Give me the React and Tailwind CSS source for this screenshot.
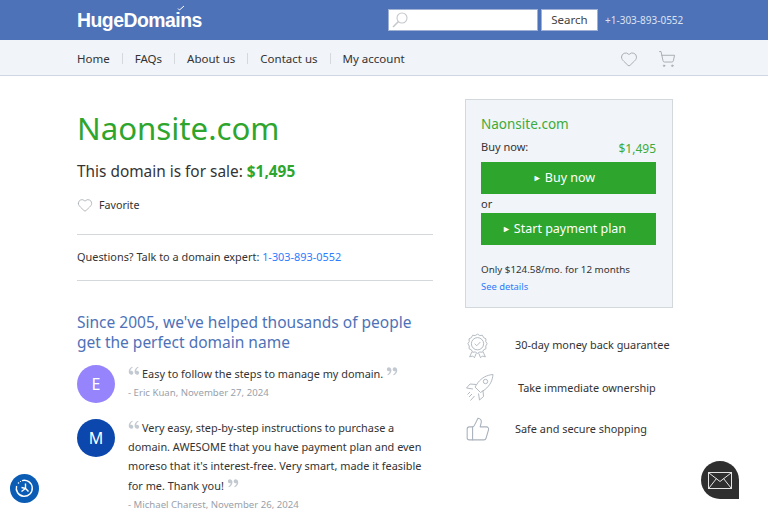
import { Heart, ShoppingCart, ThumbsUp } from 'lucide-react';
import { RiDoubleQuotesL, RiDoubleQuotesR } from 'react-icons/ri';

const navItems = ['Home', 'FAQs', 'About us', 'Contact us', 'My account'];

function Quote({ close }) {
  const Icon = close ? RiDoubleQuotesR : RiDoubleQuotesL;
  return <Icon className={`inline-block relative -top-[4px] w-[14px] h-[14px] -my-[5px] align-[1px] text-[#c3c9d0] ${close ? 'ml-[2px]' : '-ml-[1px] mr-[1px]'}`} />;
}

function Review({ letter, color, by, children }) {
  return (
    <div className="flex gap-[13px]">
      <div className={`w-[38px] h-[38px] rounded-full flex items-center justify-center text-white text-[16px] shrink-0 mt-[1px] ${color}`}>
        {letter}
      </div>
      <div className="flex-1">
        <p className="text-[10.9px] leading-[19.2px] text-[#333]">
          <Quote />{children}<Quote close />
        </p>
        <p className="text-[9.6px] leading-[19px] text-[#9aa1aa]">{by}</p>
      </div>
    </div>
  );
}

function Perk({ icon, className, children }) {
  return (
    <div className="flex items-center h-[30px]">
      <div className="w-[50px] shrink-0 text-[#a9b2bc]">{icon}</div>
      <span className={`text-[10.9px] whitespace-nowrap text-[#333] ${className}`}>{children}</span>
    </div>
  );
}

function MedalIcon() {
  return (
    <svg className="ml-[2px]" width="21" height="27" viewBox="0 0 24 28" fill="none" stroke="currentColor" strokeWidth="1">
      <path d="M12 1l2.600 1.600 3-.3 1.400 2.700 2.700 1.400-.3 3L23 12l-1.600 2.600.3 3-2.700 1.400-1.400 2.700-3-.3L12 23l-2.600-1.600-3 .3L5 19l-2.700-1.400.3-3L1 12l1.600-2.600-.3-3L5 5l1.400-2.700 3 .3z" />
      <circle cx="12" cy="12" r="7" />
      <path d="M8.800 12l2.300 2.300 4.200-4.300" />
      <path d="M5.500 21.500L3 27l3.500-1 2 2 2-5M18.500 21.500L21 27l-3.500-1-2 2-2-5" />
    </svg>
  );
}

function RocketIcon() {
  return (
    <svg width="30" height="30" viewBox="0 0 30 30" fill="none" stroke="currentColor" strokeWidth="0.9">
      <path d="M28 1.500c-6 .5-11 3-15 8l-3 4.500 5.500 5.500 4.500-3c5-4 7.500-9 8-15z" />
      <circle cx="20.500" cy="8.500" r="2.200" />
      <path d="M11 11.500l-6-.5-3.500 4 6.500 1M18 17.500l.5 6-4 3.500-1-6.500" />
      <path d="M7 21l-3 3M9.500 23l-4 4.500M5 19l-2.500 2.500" />
    </svg>
  );
}

export default function App() {
  return (
    <div className="h-[512px] overflow-hidden bg-white relative font-['Noto_Sans','Open_Sans',sans-serif]">
      {/* Top bar */}
      <header className="h-10 bg-[#4d72b8] flex items-center pl-[77px]">
        <span className="relative text-white font-bold text-[19.4px] tracking-[-0.5px] font-['Liberation_Sans',sans-serif] w-[311px] pt-[2px]">
          HugeDomains
          <svg className="absolute left-[100px] top-[1px]" width="8" height="6" viewBox="0 0 8 6" fill="none">
            <path d="M1 3.500l1.500 1.500L7 1" stroke="white" strokeWidth="1" />
          </svg>
        </span>
        <div className="w-[150px] h-[22px] bg-white border border-[#9fb2d6] flex items-center pl-[2px]">
          <svg width="18" height="18" viewBox="0 0 18 18" fill="none" stroke="#c4c8cc" strokeWidth="1.100">
            <circle cx="11" cy="7" r="5" />
            <path d="M7.500 10.500L2 16" strokeWidth="1.600" />
          </svg>
        </div>
        <div className="ml-[3px] w-[57px] h-[22px] bg-white border border-[#9fb2d6] flex items-center justify-center text-[11.5px] text-[#444]">
          Search
        </div>
        <span className="ml-[7px] text-[10px] text-[#dbe3f2]">+1-303-893-0552</span>
      </header>

      {/* Nav */}
      <nav className="h-[36px] bg-[#f1f4f8] border-b border-[#cfd6e2] flex items-center pl-[77px] pr-[92px] pt-[2px]">
        {navItems.map((item, i) => (
          <div key={item} className="flex items-center">
            {i > 0 && <span className="w-px h-[11px] bg-[#d5d9de] mx-[12px]" />}
            <span className="text-[11.5px] text-[#333]">{item}</span>
          </div>
        ))}
        <Heart className="ml-auto w-[18px] h-[18px] text-[#a3a8ae]" strokeWidth={1.2} />
        <ShoppingCart className="ml-[20px] w-[18px] h-[18px] text-[#a3a8ae]" strokeWidth={1.2} />
      </nav>

      <main className="flex pl-[77px] pt-[23px] gap-[32px]">
        {/* Left column */}
        <div className="w-[356px]">
          <h1 className="text-[31.2px] leading-[58px] text-[#2ea52d] h-[58px]">Naonsite.com</h1>
          <p className="mt-[3px] text-[15.4px] leading-[24px] text-[#333]">
            This domain is for sale: <b className="text-[#2ea52d] font-bold">$1,495</b>
          </p>
          <div className="mt-[9px] flex items-center gap-[6px] h-[24px]">
            <Heart className="w-[16px] h-[16px] text-[#a3a8ae]" strokeWidth={1.2} />
            <span className="text-[10.7px] text-[#333]">Favorite</span>
          </div>
          <div className="mt-[17px] border-y border-[#d3d8dc] h-[47px] flex items-center text-[10.9px] text-[#333]">
            Questions? Talk to a domain expert:&nbsp;<span className="text-[#2b7cff]">1-303-893-0552</span>
          </div>
          <h2 className="mt-[31px] text-[15.5px] leading-[20px] text-[#4d72b8]">
            Since 2005, we've helped thousands of people get the perfect domain name
          </h2>
          <div className="mt-[12px] flex flex-col gap-[15px]">
            <Review letter="E" color="bg-[#9584fb]" by="- Eric Kuan, November 27, 2024">
              Easy to follow the steps to manage my domain.
            </Review>
            <Review letter="M" color="bg-[#0b47ad]" by="- Michael Charest, November 26, 2024">
              Very easy, step-by-step instructions to purchase a domain. AWESOME that you have payment plan and even moreso that it's interest-free. Very smart, made it feasible for me. Thank you!
            </Review>
          </div>
        </div>

        {/* Right column */}
        <aside className="w-[208px]">
          <div className="h-[209px] bg-[#f1f4f8] border border-[#d3d8dc] pl-[15px] pr-[16px] pt-[14px]">
            <p className="text-[13.5px] leading-[20px] text-[#3cab3a]">Naonsite.com</p>
            <div className="flex justify-between h-[20px] mt-[3px]">
              <span className="text-[11px] leading-[20px] text-[#333]">Buy now:</span>
              <span className="text-[12px] leading-[23px] text-[#3cab3a]">$1,495</span>
            </div>
            <div className="mt-[5px] h-[32px] bg-[#2ea52d] flex items-center justify-center pr-[9px] text-white text-[12.5px]">
              <span className="text-[9px] mr-[3px]">►</span>Buy now
            </div>
            <p className="text-[11px] leading-[19px] text-[#333]">or</p>
            <div className="h-[32px] bg-[#2ea52d] flex items-center justify-center pr-[9px] text-white text-[12.5px]">
              <span className="text-[9px] mr-[3px]">►</span>Start payment plan
            </div>
            <p className="mt-[16px] text-[9.8px] leading-[18px] text-[#333]">Only $124.58/mo. for 12 months</p>
            <p className="text-[9.4px] leading-[16px] text-[#2b7cff]">See details</p>
          </div>
          <div className="mt-[22px] flex flex-col gap-[13px]">
            <Perk icon={<MedalIcon />} className="">30-day money back guarantee</Perk>
            <Perk icon={<RocketIcon />} className="pl-[3px]">Take immediate ownership</Perk>
            <div className="-mt-[2px]">
              <Perk icon={<ThumbsUp className="w-[26px] h-[26px]" strokeWidth={1} />} className="">Safe and secure shopping</Perk>
            </div>
          </div>
        </aside>
      </main>

      {/* Accessibility widget */}
      <div className="absolute left-[10px] top-[474px] w-[29px] h-[29px] rounded-full bg-[#0b5cb5] flex items-center justify-center">
        <svg width="21" height="21" viewBox="0 0 21 21" fill="none" stroke="white" strokeWidth="1.400">
          <path d="M8 2.600a8 8 0 1 1-5.400 5.400" />
          <path d="M11.500 5.500v5l-4 3M7.500 9.500l4 1 3 3" />
          <circle cx="4.500" cy="5" r="0.8" fill="white" stroke="none" />
          <circle cx="6.500" cy="3.500" r="0.6" fill="white" stroke="none" />
        </svg>
      </div>

      {/* Chat bubble */}
      <div className="absolute left-[701px] top-[461px] w-[38px] h-[38px] rounded-t-full rounded-bl-full bg-[#2f2f2f] flex items-center justify-center">
        <svg width="24" height="17" viewBox="0 0 24 17" fill="none" stroke="#e5e5e5" strokeWidth="1">
          <rect x="0.500" y="0.500" width="23" height="16" />
          <path d="M1 1l11 8.500L23 1M1 16l7.500-9.500M23 16l-7.500-9.500" />
        </svg>
      </div>
    </div>
  );
}
